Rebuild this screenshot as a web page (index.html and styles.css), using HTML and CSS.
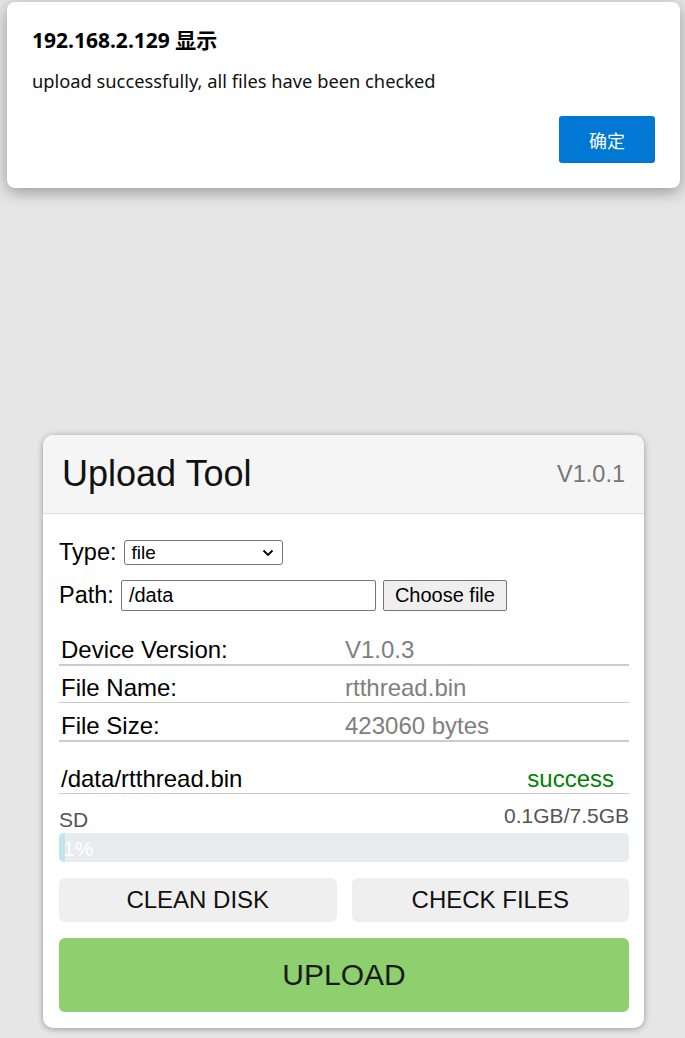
FILE: index.html
```html
<!DOCTYPE html>
<html>
<head>
<meta charset="utf-8">
<link rel="stylesheet" href="styles.css">
</head>
<body>
<div class="card">
  <div class="card-head">
    <div class="title">Upload Tool</div>
    <div class="ver">V1.0.1</div>
  </div>
  <div class="card-body">
    <div class="field">
      <label class="lbl">Type:</label>
      <div class="select"><span>file</span>
        <svg width="12" height="8" viewBox="0 0 12 8"><path d="M1.5 1.5 L6 6 L10.5 1.5" fill="none" stroke="#000" stroke-width="1.8"/></svg>
      </div>
    </div>
    <div class="field">
      <label class="lbl">Path:</label>
      <div class="input">/data</div>
      <div class="choose">Choose file</div>
    </div>
    <div class="info">
      <div class="row thick"><span class="k">Device Version:</span><span class="v">V1.0.3</span></div>
      <div class="row thin"><span class="k">File Name:</span><span class="v">rtthread.bin</span></div>
      <div class="row thick"><span class="k">File Size:</span><span class="v">423060 bytes</span></div>
    </div>
    <div class="file-row"><span class="path">/data/rtthread.bin</span><span class="ok">success</span></div>
    <div class="disk"><span class="sd">SD</span><span class="cap">0.1GB/7.5GB</span></div>
    <div class="bar"><div class="fill" style="width:1%"><span>1%</span></div></div>
    <div class="btns">
      <div class="btn">CLEAN DISK</div>
      <div class="btn">CHECK FILES</div>
    </div>
    <div class="upload">UPLOAD</div>
  </div>
</div>

<div class="alert">
  <div class="alert-title">192.168.2.129 显示</div>
  <div class="alert-msg">upload successfully, all files have been checked</div>
  <div class="alert-actions"><div class="alert-btn">确定</div></div>
</div>
</body>
</html>
```
FILE: styles.css
```css
html, body {
  margin: 0;
  padding: 0;
}
body {
  background: #e6e6e6;
  font-family: "Liberation Sans", Arial, sans-serif;
  height: 1038px;
  overflow: hidden;
  padding-top: 435px;
  box-sizing: border-box;
}
.card {
  width: 601px;
  margin-left: 43px;
  background: #fff;
  border-radius: 10px;
  box-shadow: 0 1px 6px rgba(0,0,0,0.35);
  overflow: hidden;
}
.card-head {
  background: #f5f5f5;
  border-bottom: 1px solid #dcdcdc;
  height: 78px;
  display: flex;
  align-items: center;
  justify-content: space-between;
  padding: 0 19px;
}
.title {
  font-size: 36px;
  color: #111;
}
.ver {
  font-size: 23.5px;
  color: #777;
}
.card-body {
  padding: 25px 15px 16px 16px;
}
.field {
  display: flex;
  align-items: center;
  margin-bottom: 14px;
}
.lbl {
  font-size: 23.5px;
  color: #000;
  margin-right: 8px;
}
.select {
  height: 23px;
  border: 1px solid #767676;
  border-radius: 3px;
  display: flex;
  align-items: center;
  justify-content: space-between;
  padding: 0 8px 0 6px;
  box-sizing: content-box;
  font-size: 19px;
  width: 143px;
}
.input {
  width: 246px;
  height: 29px;
  border: 1px solid #767676;
  border-radius: 2px;
  font-size: 20px;
  line-height: 29px;
  padding-left: 7px;
  margin-left: -1px;
}
.choose {
  margin-left: 7px;
  height: 29px;
  border: 1px solid #767676;
  border-radius: 2px;
  background: #efefef;
  font-size: 20px;
  line-height: 29px;
  padding: 0 11px;
}
.info {
  margin-top: 16px;
}
.row {
  display: flex;
  box-sizing: border-box;
  padding-top: 9px;
  line-height: 28px;
  font-size: 24px;
}
.row.thick { border-bottom: 2px solid #ccc; }
.row.thin { border-bottom: 1px solid #ccc; padding-top: 8px; }
.k {
  width: 284px;
  padding-left: 2px;
  color: #000;
}
.v { color: #808080; }
.file-row {
  margin-top: 23px;
  display: flex;
  justify-content: space-between;
  line-height: 28px;
  border-bottom: 1px solid #ccc;
  font-size: 24px;
  padding: 0 15px 0 2px;
}
.ok { color: #008000; }
.disk {
  display: flex;
  justify-content: space-between;
  font-size: 21px;
  color: #555;
  margin-top: 10px;
  height: 29px;
}
.sd { padding-top: 4px; }
.bar {
  height: 29px;
  background: #e9ecef;
  border-radius: 5px;
  overflow: hidden;
}
.fill {
  height: 100%;
  background: #bfe6ee;
  color: #fff;
  font-size: 21px;
  line-height: 32px;
  white-space: nowrap;
  overflow: visible;
}
.fill span { padding-left: 4px; }
.btns {
  display: flex;
  gap: 15px;
  margin-top: 16px;
}
.btn {
  flex: 1;
  height: 44px;
  background: #efefef;
  border-radius: 6px;
  display: flex;
  align-items: center;
  justify-content: center;
  font-size: 24px;
  color: #111;
}
.upload {
  margin-top: 16px;
  height: 74px;
  background: #8ecf6e;
  border-radius: 6px;
  display: flex;
  align-items: center;
  justify-content: center;
  font-size: 30px;
  color: #1a1a1a;
}
.alert {
  position: absolute;
  left: 7px;
  top: 2px;
  width: 673px;
  height: 186px;
  box-sizing: border-box;
  background: #fff;
  border-radius: 8px;
  box-shadow: 0 4px 16px rgba(0,0,0,0.35);
  padding: 24px 25px 0 25px;
  font-family: "Noto Sans", "Noto Sans CJK SC", sans-serif;
}
.alert-title {
  font-size: 21px;
  font-weight: bold;
  color: #000;
  line-height: 28px;
}
.alert-msg {
  font-size: 18.3px;
  color: #111;
  margin-top: 14px;
  line-height: 26px;
}
.alert-actions {
  display: flex;
  justify-content: flex-end;
  margin-top: 22px;
}
.alert-btn {
  width: 96px;
  height: 47px;
  background: #0078d4;
  border-radius: 3px;
  color: #fff;
  font-size: 18px;
  display: flex;
  align-items: center;
  justify-content: center;
}
```
